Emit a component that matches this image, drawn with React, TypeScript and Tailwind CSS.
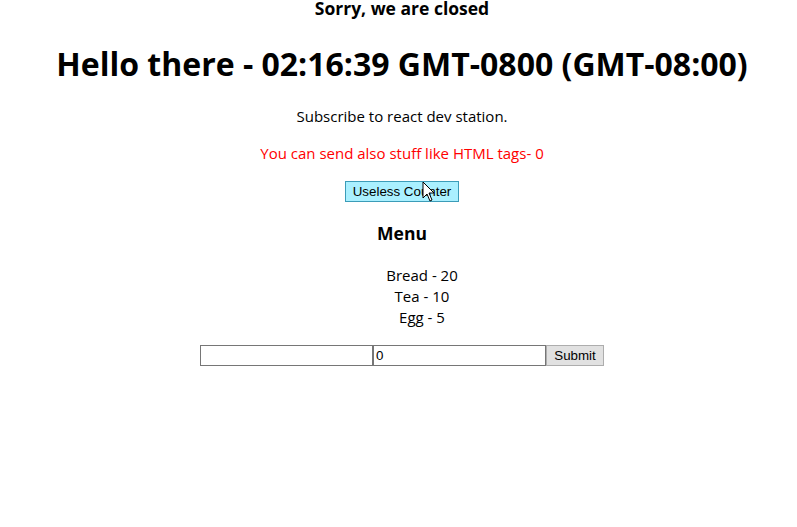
export default function App() {
  return (
    <div className="min-h-[527px] bg-white flex flex-col items-center text-black pl-[7px]" style={{ fontFamily: '"Open Sans", "Noto Sans", sans-serif' }}>
      <h3 className="text-[17.5px] font-bold leading-[17px] mt-0">Sorry, we are closed</h3>
      <h1 className="text-[32px] font-bold leading-[40px] mt-[27px]">Hello there - 02:16:39 GMT-0800 (GMT-08:00)</h1>
      <p className="text-[15px] leading-[20px] mt-[22px]">Subscribe to react dev station.</p>
      <p className="text-[15px] leading-[20px] mt-[17px] text-[#ff0000]">You can send also stuff like HTML tags- 0</p>
      <div className="relative mt-[15px]">
        <button className="h-[21px] w-[114px] bg-[#aaf0ff] border border-[#3c9cb8] text-[13.33px] leading-[19px] text-black" style={{ fontFamily: '"Liberation Sans", Arial, sans-serif' }}>Useless Counter</button>
        <svg className="absolute left-[77px] top-[3px]" width="13" height="21" viewBox="0 0 13 21">
          <path d="M1 1 L1 17 L5 13 L8 20 L10 19 L7 12 L12 12 Z" fill="white" stroke="black" strokeWidth="1" strokeLinejoin="round" />
        </svg>
      </div>
      <h3 className="text-[17.5px] font-bold leading-[24px] mt-[19px]">Menu</h3>
      <ul className="pl-[40px] mt-[20px] text-[15px] leading-[21px] text-center">
        <li>Bread - 20</li>
        <li>Tea - 10</li>
        <li>Egg - 5</li>
      </ul>
      <form className="flex mt-[17px]" style={{ fontFamily: '"Liberation Sans", Arial, sans-serif' }} onSubmit={(e) => e.preventDefault()}>
        <input className="w-[173px] h-[21px] border border-[#767676] px-[2px] text-[13.33px] outline-none" />
        <input className="w-[173px] h-[21px] border border-[#767676] px-[2px] text-[13.33px] outline-none" defaultValue="0" />
        <button className="w-[58px] h-[21px] bg-[#e1e1e1] border border-[#adadad] text-[13.33px] leading-[19px]">Submit</button>
      </form>
    </div>
  );
}
